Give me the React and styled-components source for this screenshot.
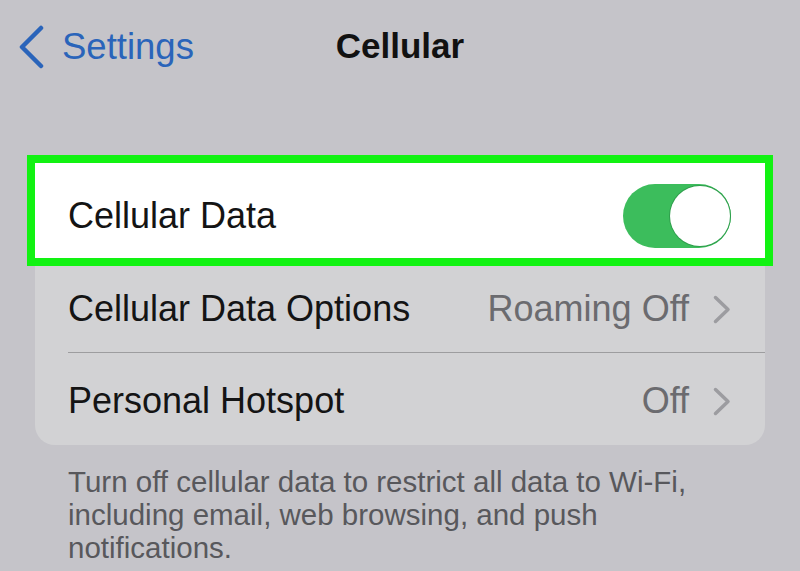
import React from "react";
import styled, { createGlobalStyle } from "styled-components";

const GlobalStyle = createGlobalStyle`
  html, body {
    margin: 0;
    padding: 0;
    background: #c5c4c9;
  }
  body {
    font-family: "Liberation Sans", Arial, sans-serif;
    overflow: hidden;
  }
`;

const Screen = styled.div`
  width: 800px;
  height: 571px;
  background: #c5c4c9;
  overflow: hidden;
`;

const NavBar = styled.div`
  position: relative;
  height: 110px;
  padding-top: 26px;
  box-sizing: border-box;
  display: flex;
  justify-content: center;
`;

const BackButton = styled.div`
  position: absolute;
  left: 18px;
  top: 25px;
  display: flex;
  align-items: center;
  gap: 18px;
  color: #2a64ba;
  font-size: 36.5px;
`;

const Title = styled.h1`
  margin: 0;
  font-size: 35px;
  font-weight: 700;
  color: #111;
  line-height: normal;
`;

const Card = styled.div`
  margin: 53px 35px 0;
  background: #d2d2d4;
  border-radius: 0 0 20px 20px;
`;

const Row = styled.div`
  position: relative;
  height: ${(p) => p.$h}px;
  display: flex;
  padding-left: 33px;
  background: ${(p) => (p.$highlight ? "#ffffff" : "transparent")};
  outline: ${(p) => (p.$highlight ? "8px solid #12f212" : "none")};
`;

const RowBody = styled.div`
  flex: 1;
  display: flex;
  align-items: center;
  padding: ${(p) => p.$pt}px 34px 0 0;
  box-sizing: border-box;
  border-bottom: ${(p) => (p.$divider ? "1.5px solid #9d9d9f" : "none")};
`;

const Label = styled.span`
  flex: 1;
  font-size: 36px;
  color: #141414;
`;

const Value = styled.span`
  font-size: 36px;
  color: #6b6b6f;
  margin-right: 24px;
`;

const Switch = styled.div`
  width: 108px;
  height: 64px;
  border-radius: 32px;
  background: #3cbd5c;
  display: flex;
  justify-content: flex-end;
  align-items: center;
  padding: 0 1px;
  box-sizing: border-box;
`;

const Knob = styled.div`
  width: 60px;
  height: 60px;
  border-radius: 50%;
  background: #fff;
  box-shadow: 0 0 0 1px #2f9e4c;
`;

const Footer = styled.p`
  margin: 20px 0 0;
  padding: 0 60px 0 68px;
  font-size: 29.5px;
  line-height: 33px;
  color: #58585c;
`;

const BackChevron = () => (
  <svg width="26" height="44" viewBox="0 0 26 44">
    <path
      d="M23 3 L4 22 L23 41"
      fill="none"
      stroke="#2a64ba"
      strokeWidth="4.5"
      strokeLinecap="round"
      strokeLinejoin="round"
    />
  </svg>
);

const Chevron = () => (
  <svg width="18" height="29" viewBox="0 0 18 29">
    <path
      d="M2.5 2.5 L15 14.5 L2.5 26.5"
      fill="none"
      stroke="#9c9ca0"
      strokeWidth="3.5"
      strokeLinecap="round"
      strokeLinejoin="round"
    />
  </svg>
);

export default function App() {
  return (
    <Screen>
      <GlobalStyle />
      <NavBar>
        <BackButton>
          <BackChevron />
          <span>Settings</span>
        </BackButton>
        <Title>Cellular</Title>
      </NavBar>

      <Card>
        <Row $highlight $h={95}>
          <RowBody $pt={10}>
            <Label>Cellular Data</Label>
            <Switch>
              <Knob />
            </Switch>
          </RowBody>
        </Row>
        <Row $h={95}>
          <RowBody $divider $pt={8}>
            <Label>Cellular Data Options</Label>
            <Value>Roaming Off</Value>
            <Chevron />
          </RowBody>
        </Row>
        <Row $h={92}>
          <RowBody $pt={4}>
            <Label>Personal Hotspot</Label>
            <Value>Off</Value>
            <Chevron />
          </RowBody>
        </Row>
      </Card>

      <Footer>
        Turn off cellular data to restrict all data to Wi-Fi, including email,
        web browsing, and push notifications.
      </Footer>
    </Screen>
  );
}
